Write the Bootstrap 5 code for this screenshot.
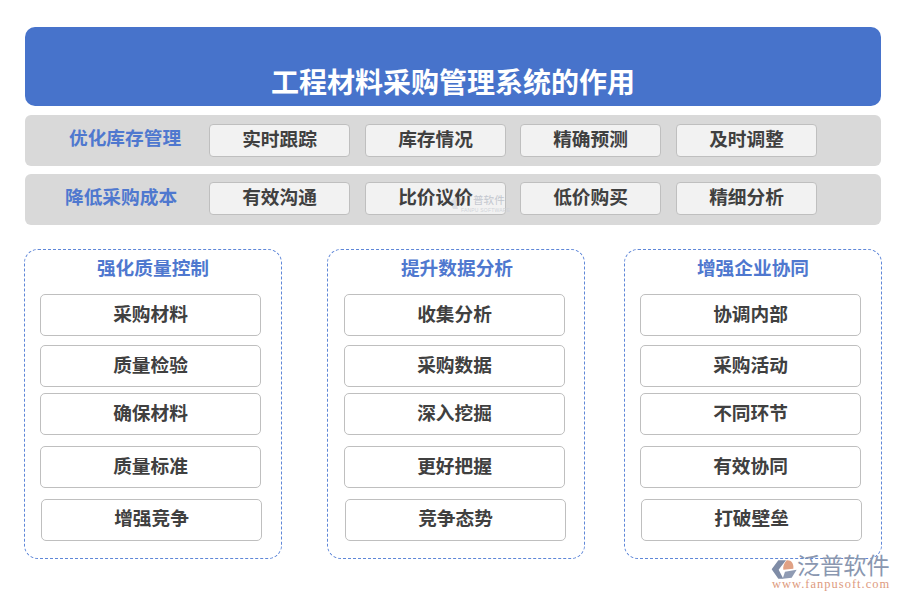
<!doctype html>
<html lang="zh"><head><meta charset="utf-8">
<link href="https://cdn.jsdelivr.net/npm/bootstrap@5.3.0/dist/css/bootstrap.min.css" rel="stylesheet">
<style>
html,body{margin:0;height:600px;overflow:hidden;background:#fff}
body{font-family:"Liberation Sans","Noto Sans CJK SC",sans-serif;position:relative}
.wrap{padding:27px 19px 0 25px;width:900px}
.title-bar{height:79px;background:#4773cb;border-radius:10px;color:#fff;font-size:28px;font-weight:700;line-height:40px;padding-top:37px;text-align:center}
.band{height:51px;background:#d9d9d9;border-radius:6px;margin-top:9px;gap:15px}
.band.second{margin-top:8px;padding-bottom:2px}
.band-label{width:169px;flex:none;padding-left:44px;font-size:18.7px;font-weight:700;color:#4f78cf;line-height:24px;padding-bottom:4px;white-space:nowrap}
.band-label.low{padding-left:40px;padding-bottom:2px}
.chip{width:141px;height:33px;flex:none;background:#f2f2f2;border:1px solid #bfbfbf;border-radius:4px;color:#404040;font-size:18.7px;font-weight:700;line-height:30px;text-align:center}
.chip.tight{margin-left:-1px}
.chip-top{position:relative;z-index:2}
.panels{margin-top:24px;margin-left:-1px}
.panel{width:258px;height:310px;flex:none;border:1px dashed #5f87d8;border-radius:14px;padding:7px 20px 0 15px}
.panel.p2{margin-left:45px;padding-left:16px}
.panel.p3{margin-left:39px}
.panel-title{text-align:center;font-size:18.7px;font-weight:700;color:#4f78cf;line-height:24px;height:37px;width:226px}
.item{width:221px;height:42px;border:1px solid #bfbfbf;border-radius:5px;background:#fff;color:#404040;font-size:18.7px;font-weight:700;line-height:40px;text-align:center}
.i2{margin-top:9px}.i3{margin-top:6px}.i4{margin-top:11px}.i5{margin-top:11px;margin-left:1px;line-height:38px}
.mark-faint{position:absolute;left:450px;top:193px;width:56px;height:20px;padding-left:23px;color:#c3c7cf;font-size:10.6px;line-height:14px;white-space:nowrap;z-index:1}
.mark-faint svg{position:absolute;left:0;top:1px}
.mark-sub{font-size:5px;line-height:6px;letter-spacing:.2px;margin-left:-12px;color:#d0d3d9}
.logo{position:absolute;left:769px;top:553px;width:125px;height:46px}
.logo svg{position:absolute;left:1px;top:4px}
.logo-cn{position:absolute;left:28px;top:1px;font-size:23.2px;line-height:24px;color:#8a97b0;white-space:nowrap}
.logo-en{position:absolute;left:3px;top:25px;font-family:"Liberation Serif",serif;font-size:12.4px;line-height:12px;color:#dd9a7e;letter-spacing:1.05px;white-space:nowrap}
</style></head><body>
<div class="wrap">
  <div class="title-bar">工程材料采购管理系统的作用</div>
  <div class="band d-flex align-items-center">
    <div class="band-label">优化库存管理</div>
    <div class="chip">实时跟踪</div><div class="chip">库存情况</div><div class="chip tight">精确预测</div><div class="chip">及时调整</div>
  </div>
  <div class="band second d-flex align-items-center">
    <div class="band-label low">降低采购成本</div>
    <div class="chip">有效沟通</div><div class="chip"><span class="chip-top">比价议价</span></div><div class="chip tight">低价购买</div><div class="chip">精细分析</div>
  </div>
  <div class="panels d-flex">
    <div class="panel">
      <div class="panel-title">强化质量控制</div>
      <div class="item">采购材料</div><div class="item i2">质量检验</div><div class="item i3">确保材料</div><div class="item i4">质量标准</div><div class="item i5">增强竞争</div>
    </div>
    <div class="panel p2">
      <div class="panel-title">提升数据分析</div>
      <div class="item">收集分析</div><div class="item i2">采购数据</div><div class="item i3">深入挖掘</div><div class="item i4">更好把握</div><div class="item i5">竞争态势</div>
    </div>
    <div class="panel p3">
      <div class="panel-title">增强企业协同</div>
      <div class="item">协调内部</div><div class="item i2">采购活动</div><div class="item i3">不同环节</div><div class="item i4">有效协同</div><div class="item i5">打破壁垒</div>
    </div>
  </div>
</div>
<div class="mark-faint" aria-hidden="true"><svg width="18" height="16" viewBox="0 0 18 16"><path d="M7 1 12 1 6 8 8 15 3 15 0 8Z" fill="#dcdfe4"/><path d="M9 4 16 6 13 10 7 9Z" fill="#ecdcd3"/></svg>普软件<div class="mark-sub">FANPU SOFTWARE</div></div>
<div class="logo">
  <svg width="30" height="25" viewBox="0 0 90 75"><path d="M25 10 48 10 32 30 26 38 40 65 25 65 5 37Z" fill="#7f8ca6"/><path d="M50 10C62 8 72 18 70 35L40 38C38 30 42 18 50 10Z" fill="#e0a184"/><path d="M45 44 80 38 65 62 38 65Z" fill="#8f9bb3"/></svg>
  <div class="logo-cn">泛普软件</div>
  <div class="logo-en">www.fanpusoft.com</div>
</div>
</body></html>
